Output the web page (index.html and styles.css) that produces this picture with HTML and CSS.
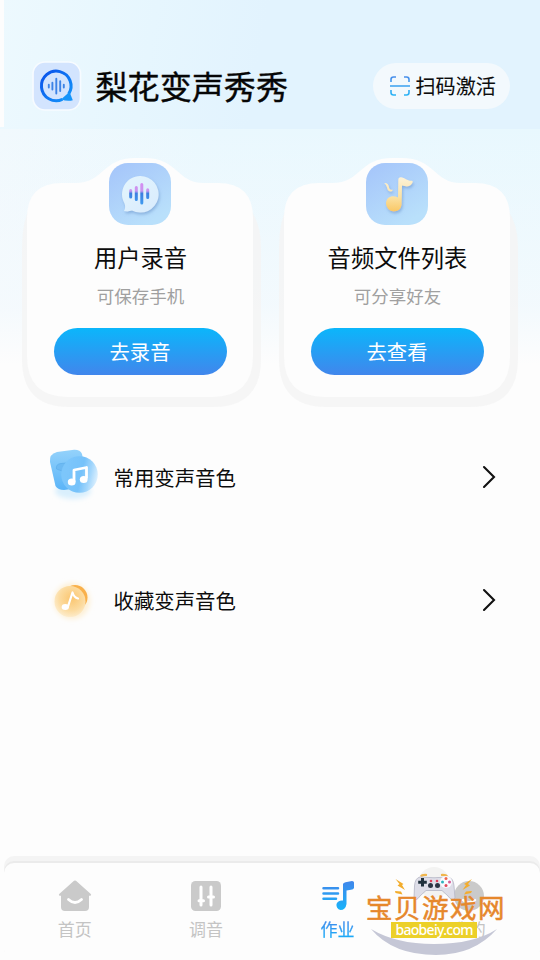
FILE: index.html
```html
<!DOCTYPE html>
<html lang="zh-CN">
<head>
<meta charset="utf-8">
<title>梨花变声秀秀</title>
<link rel="stylesheet" href="styles.css">
</head>
<body>
<svg class="defs" width="0" height="0" aria-hidden="true">
  <defs>
    <linearGradient id="logoStroke" x1="0" y1="0" x2="1" y2="1"><stop offset="0" stop-color="#0a50ea"/><stop offset="1" stop-color="#1497fb"/></linearGradient>
    <linearGradient id="scanStroke" gradientUnits="userSpaceOnUse" x1="0" y1="0" x2="0" y2="20"><stop offset="0" stop-color="#4a8dea"/><stop offset="1" stop-color="#2ab5f5"/></linearGradient>
    <linearGradient id="tile" x1="0" y1="0" x2=".6" y2="1"><stop offset="0" stop-color="#a4c4fa"/><stop offset="1" stop-color="#b9e0fb"/></linearGradient>
    <linearGradient id="bar" gradientUnits="userSpaceOnUse" x1="0" y1="20" x2="0" y2="41"><stop offset="0" stop-color="#d58cf2"/><stop offset=".38" stop-color="#c995ee"/><stop offset=".5" stop-color="#3c7fe0"/><stop offset="1" stop-color="#3f9af0"/></linearGradient>
    <linearGradient id="bubble" x1="0" y1="0" x2="1" y2="1"><stop offset="0" stop-color="#e4f5fd"/><stop offset="1" stop-color="#d8ebfd"/></linearGradient>
    <linearGradient id="gold" gradientUnits="userSpaceOnUse" x1="30" y1="14" x2="30" y2="50"><stop offset="0" stop-color="#fdf3da"/><stop offset=".55" stop-color="#fbe2a4"/><stop offset="1" stop-color="#f9c55f"/></linearGradient>
    <linearGradient id="blueTile" x1="0" y1="0" x2="0" y2="1"><stop offset="0" stop-color="#94d2fb"/><stop offset="1" stop-color="#5ab4f8"/></linearGradient>
    <linearGradient id="blueDisc" x1=".1" y1=".4" x2="1" y2=".6"><stop offset="0" stop-color="#7cc6fb"/><stop offset=".5" stop-color="#76c2fa"/><stop offset=".75" stop-color="#a2d6fc"/><stop offset="1" stop-color="#dff1fe"/></linearGradient>
    <radialGradient id="orangeDisc" cx=".55" cy=".4" r=".65"><stop offset="0" stop-color="#fbc670"/><stop offset=".6" stop-color="#fcdb9f"/><stop offset="1" stop-color="#fdefd4"/></radialGradient>
    <linearGradient id="navBlue" gradientUnits="userSpaceOnUse" x1="0" y1="0" x2="0" y2="30"><stop offset="0" stop-color="#4285ea"/><stop offset="1" stop-color="#18b3fa"/></linearGradient>
    <filter id="soft" x="-40%" y="-40%" width="180%" height="180%"><feGaussianBlur stdDeviation="2.6"/></filter>
    <filter id="edge" x="-10%" y="-10%" width="120%" height="120%"><feGaussianBlur stdDeviation=".7"/></filter>
    <filter id="drop" x="-30%" y="-30%" width="160%" height="160%"><feDropShadow dx="1" dy="2" stdDeviation="1.8" flood-color="#6791c8" flood-opacity=".55"/></filter>
    <symbol id="panel" viewBox="0 0 240 251">
      <path d="M40 26H180Q240 36 240 90V202Q240 250 192 250H48Q1 250 1 202V90Q1 36 40 26Z" fill="#f4f4f4" class="panel-shade"/>
      <path d="M6 61Q6 26 41 26H54C84 26 80 1 115 1H123C158 1 155 26 183 26H197Q232 26 232 61V199Q232 240 191 240H47Q6 240 6 199Z" fill="#fdfdfd"/>
    </symbol>
    <symbol id="chevron" viewBox="0 0 14 24"><path d="M2 2L12 12L2 22" fill="none" stroke="#111" stroke-width="2.1" stroke-linecap="round"/></symbol>
  </defs>
</svg>

<div class="screen">
  <header class="header">
    <svg class="logo" viewBox="0 0 50 50">
      <rect x="1" y="1" width="47.500" height="48" rx="12" fill="#d3e4fe" stroke="#f7fbff" stroke-width="1.700"/>
      <path d="M37.200 32.500A14.800 14.800 0 1 0 31 37.800" transform="translate(-.6 .6)" fill="none" stroke="url(#logoStroke)" stroke-width="3"/>
      <path d="M29 38.500L34 34L37.500 31L40.800 39.200Q35.500 40.500 29 38.500Z" fill="#1594fa"/>
      <path d="M16.800 23.700V26.500M20.400 21.700V28.500M24.300 17.700V32.500M28.200 20.200V30M31.800 23.700V26.500" stroke="#3d83e6" stroke-width="1.900" stroke-linecap="round"/>
    </svg>
    <h1 class="app-name">梨花变声秀秀</h1>
    <div class="scan">
      <svg class="scan-icon" viewBox="0 0 20 20"><path d="M1 6V3.500Q1 1 3.500 1H6M14 1H16.500Q19 1 19 3.500V6M1 14V16.500Q1 19 3.500 19H6M14 19H16.500Q19 19 19 16.500V14M0 10H20" fill="none" stroke="url(#scanStroke)" stroke-width="1.600"/></svg>
      <span>扫码激活</span>
    </div>
  </header>

  <section class="cards">
    <article class="card">
      <svg class="card-bg"><use href="#panel"/></svg>
      <svg class="card-icon" viewBox="0 0 62 62">
        <rect width="62" height="62" rx="19" fill="url(#tile)"/>
        <path d="M31 13A18.300 18.300 0 1 1 23 47.600Q19 49 15 48Q17 45 15.500 40.500A18.300 18.300 0 0 1 31 13Z" fill="url(#bubble)" filter="url(#drop)"/>
        <path d="M21.700 27.500V34M27.300 24.500V36.500M32.800 21.500V40M38.700 26.800V34.500" stroke="url(#bar)" stroke-width="3" stroke-linecap="round"/>
      </svg>
      <h2 class="card-title">用户录音</h2>
      <p class="card-sub">可保存手机</p>
      <div class="card-btn">去录音</div>
    </article>
    <article class="card">
      <svg class="card-bg"><use href="#panel"/></svg>
      <svg class="card-icon" viewBox="0 0 62 62">
        <rect width="62" height="62" rx="19" fill="url(#tile)"/>
        <g fill="url(#gold)" filter="url(#drop)">
          <path d="M32.300 17Q32.300 14 35 14.200C39 14.500 42 18.500 46 17.700Q47.500 18.300 46 20.500C43.500 24.500 39.500 23.500 36 22.500L35.600 42Q34.500 48.500 27.500 48.500A8 8 0 0 1 20 40.500C20 33.500 27 31.500 32 34.500Z"/>
          <path d="M18.200 20Q22.500 19.500 23.200 25Q24 27.500 26.500 26.500Q27 28.500 24 28.500Q21.500 28 21 24.500Q20.500 22 18.200 20Z"/>
        </g>
      </svg>
      <h2 class="card-title">音频文件列表</h2>
      <p class="card-sub">可分享好友</p>
      <div class="card-btn">去查看</div>
    </article>
  </section>

  <section class="rows">
    <div class="row">
      <svg class="row-icon" viewBox="0 0 56 56">
        <ellipse cx="27" cy="42" rx="18" ry="8" fill="#d9effd" filter="url(#soft)"/>
        <path d="M11 3L28 .8Q34 .5 36 5L41 28Q42 37 36 38.500L18 41Q12 41 9.500 37L4 13Q3 5 11 3Z" fill="url(#blueTile)"/>
        <path d="M10.500 20Q9.500 15 15 14.500L20 14L16 22Z" fill="#6dbaf3" stroke="#59abea" stroke-width=".6"/>
        <circle cx="33.500" cy="25.500" r="18.300" fill="url(#blueDisc)" filter="url(#edge)"/>
        <path d="M28 33V21L40.500 18.500V29.500" fill="none" stroke="#fff" stroke-width="2.800" stroke-linejoin="round"/>
        <ellipse cx="25.700" cy="33" rx="3.900" ry="3.500" fill="#fff"/><ellipse cx="37.700" cy="30.500" rx="3.900" ry="3.500" fill="#fff"/>
      </svg>
      <span class="row-label">常用变声音色</span>
      <svg class="chevron"><use href="#chevron"/></svg>
    </div>
    <div class="row">
      <svg class="row-icon" viewBox="0 0 56 56">
        <circle cx="26" cy="29" r="18" fill="#fdf0d6" filter="url(#soft)"/>
        <circle cx="29" cy="25.500" r="12.500" fill="#f9b04a"/>
        <circle cx="24" cy="29.500" r="15.500" fill="url(#orangeDisc)" filter="url(#edge)"/>
        <path d="M22 34.500L26.500 20.500Q28 25.500 32 26.500" fill="none" stroke="#fff" stroke-width="2.200" stroke-linecap="round" stroke-linejoin="round"/>
        <ellipse cx="19.300" cy="35" rx="3.700" ry="3" fill="#fff"/>
      </svg>
      <span class="row-label">收藏变声音色</span>
      <svg class="chevron"><use href="#chevron"/></svg>
    </div>
  </section>

  <nav class="nav">
    <div class="tab">
      <svg class="tab-icon" viewBox="0 0 34 32"><path d="M16 .8Q17 0 18 .8L32.500 13.800Q34 15.500 32 15.700H31V27Q31 31 27 31H7Q3 31 3 27V15.700H2Q0 15.500 1.500 13.800Z" fill="#cacaca"/><path d="M10.500 19.500Q17 25.500 23.500 19.500" fill="none" stroke="#fff" stroke-width="2.800" stroke-linecap="round"/></svg>
      <span>首页</span>
    </div>
    <div class="tab">
      <svg class="tab-icon" viewBox="0 0 34 32"><rect x="2" y="1" width="30" height="30" rx="4.500" fill="#cacaca"/><path d="M12 7V25M22 7V25" stroke="#fff" stroke-width="3" stroke-linecap="round"/><path d="M10 20.700H14.500M19.500 17H24.500" stroke="#fff" stroke-width="3" stroke-linecap="round"/></svg>
      <span>调音</span>
    </div>
    <div class="tab tab-active">
      <svg class="tab-icon" viewBox="0 0 34 32"><path d="M3.500 8.200H18M3.500 13.500H18M3.500 18.800H16" stroke="url(#navBlue)" stroke-width="2.500" stroke-linecap="round"/><path d="M23 4Q23.500 2.700 25.500 2.300L32 1Q34 1 34 2.500V8Q33.500 9.800 31 9.800L26.500 10.500V24Q25.500 30 20.500 30A5.500 5.500 0 0 1 16.500 24Q18 20 23 20.500Z" fill="url(#navBlue)"/></svg>
      <span>作业</span>
    </div>
    <div class="tab">
      <svg class="tab-icon" viewBox="0 0 34 32"><circle cx="17" cy="16" r="15" fill="#cacaca"/><path d="M11 20Q17 25 23 20" fill="none" stroke="#fff" stroke-width="2.500" stroke-linecap="round"/></svg>
      <span>我的</span>
    </div>
  </nav>

  <svg class="brand" viewBox="0 0 150 100" width="150" height="100">
    <circle cx="74" cy="22.500" r="15.500" fill="#f3f3f2"/>
    <path d="M61 16.500Q62 14.500 67 15M81 15Q86 14.500 87 16.500" fill="none" stroke="#f0b64d" stroke-width="2.200"/>
    <path d="M60 17Q74 18.500 88 17Q93.500 18 94 26L95 38Q92 42 88 36L82 30.500H66L60 36Q56 42 54 38L54.500 26Q55 18 60 17Z" fill="#dedee8" stroke="#b4b5c4" stroke-width=".8"/>
    <path d="M62.500 18V26.500M58.200 22.200H66.800" stroke="#20313c" stroke-width="3"/>
    <circle cx="70.500" cy="25.500" r="2.500" fill="#2c3543"/><circle cx="77.500" cy="25.500" r="2.500" fill="#2c3543"/>
    <circle cx="71" cy="21" r="1.300" fill="#de4058"/><circle cx="77" cy="21" r="1.300" fill="#de4058"/>
    <circle cx="86" cy="22" r="6" fill="#fafaff"/>
    <circle cx="86" cy="18.500" r="1.500" fill="#ef6650"/><circle cx="86" cy="25.500" r="1.500" fill="#e14a5b"/><circle cx="82.500" cy="22" r="1.500" fill="#2eb3bd"/><circle cx="89.500" cy="22" r="1.500" fill="#d55e96"/>
    <path d="M35.500 19L43.500 24L42 25L45 30L37.500 25.500L39.500 24ZM35 31L41 31.500L42.500 34.500L35.500 33ZM112 19L104 24L106 25L102.500 30L110 25.500L108 24ZM112 31L106 31.500L104 34.500L111 33Z" fill="#f3ad2d"/>
    <path d="M11 69Q36 84 74 84Q114 84 137 69Q114 95 76 95Q33 95 11 69Z" fill="#c5c7d6"/>
    <rect x="31" y="62" width="86" height="16" fill="#ecd028"/>
    <text class="brand-name brand-halo" x="6" y="58">宝贝游戏网</text>
    <text class="brand-url" x="35.500" y="74.500" textLength="78">baobeiy.com</text>
  </svg>
</div>
</body>
</html>
```
FILE: styles.css
```css
* { box-sizing: border-box; }

body {
  margin: 0;
  background: #fdfdfd;
  font-family: "Noto Sans CJK SC", sans-serif;
  color: #0c0c0c;
}

.defs { position: absolute; }

.screen {
  position: relative;
  display: flex;
  flex-direction: column;
  height: 960px;
  overflow: hidden;
  background:
    linear-gradient(#fdfdfd, #fdfdfd) 0 0 / 4px 127px no-repeat,
    linear-gradient(100deg, #edf9fe 0, #e6f6fe 28%, #e2f3fe 48%, #e2f3fe) 0 0 / 100% 129px no-repeat,
    linear-gradient(to bottom, rgba(253, 253, 253, 0) 0, rgba(246, 250, 253, .75) 75%, #fdfdfd 100%) 0 129px / 100% 236px no-repeat,
    linear-gradient(100deg, #f1f9fd 0, #eaf8fe 35%, #e8f8fe) 0 129px / 100% 236px no-repeat,
    #fdfdfd;
}

.header {
  display: flex;
  align-items: center;
  height: 50px;
  margin: 61px 30px 0 32px;
}

.logo { width: 50px; height: 50px; flex: none; }

.app-name {
  margin: -2px auto 0 13.5px;
  font-size: 32.1px;
  line-height: 46px;
  font-weight: 400;
  color: #060606;
  -webkit-text-stroke: .4px;
}

.scan {
  display: flex;
  align-items: center;
  gap: 5.5px;
  width: 137px;
  height: 46px;
  padding-left: 17px;
  border-radius: 23px;
  background: #f3f9fd;
  font-size: 20.1px;
  line-height: 30px;
  font-weight: 400;
  white-space: nowrap;
  -webkit-text-stroke: .1px;
}

.scan-icon { width: 20px; height: 20px; flex: none; }

.cards {
  display: grid;
  grid-template-columns: 226px 226px;
  column-gap: 31px;
  margin: 47px 0 0 27px;
}

.card {
  position: relative;
  display: flex;
  flex-direction: column;
  align-items: center;
  height: 240px;
  padding-top: 5px;
}

.card > * { position: relative; }

.card > .card-bg {
  position: absolute;
  left: -6px;
  top: -1px;
  width: 240px;
  height: 251px;
}

.panel-shade { opacity: .85; }

.card-icon { width: 62px; height: 62px; }

.card-title {
  margin: 16px 0 0 1px;
  font-size: 23.3px;
  line-height: 33px;
  font-weight: 400;
}

.card-sub {
  margin: 9px 0 0 1px;
  font-size: 17.5px;
  line-height: 25px;
  color: #a0a0a0;
}

.card-btn {
  width: 173px;
  height: 47px;
  margin-top: 20px;
  border-radius: 24px;
  background: linear-gradient(#0bb6fb, #4186ec);
  color: #fff;
  font-size: 20.3px;
  line-height: 47px;
  text-align: center;
}

.rows {
  display: flex;
  flex-direction: column;
  margin: 18px 44px 0 46px;
}

.row {
  display: flex;
  align-items: center;
  height: 122.5px;
}

.row-icon { width: 56px; height: 56px; flex: none; }

.row-label {
  margin-left: 11.5px;
  font-size: 20.4px;
  line-height: 30px;
}

.chevron { width: 14px; height: 24px; margin-left: auto; }

.nav {
  display: grid;
  grid-template-columns: repeat(4, 131.4px);
  height: 97px;
  margin: auto 0 0 4px;
  padding: 17px 0 0 5px;
  border-radius: 10px;
  background: #fdfdfd;
  box-shadow: 0 -2px 0 #ebebeb, 0 -7px 0 #f4f4f4;
}

.tab {
  display: flex;
  flex-direction: column;
  align-items: center;
  gap: 4px;
  color: #c4c4c4;
  font-size: 17px;
  line-height: 25px;
}

.tab-icon { width: 34px; height: 32px; }

.tab-active span {
  background: linear-gradient(#4388eb 15%, #18adf8 90%);
  background-clip: text;
  -webkit-background-clip: text;
  color: transparent;
  -webkit-text-stroke: .25px transparent;
}

.brand { position: absolute; left: 360px; top: 860px; }

.brand-name {
  fill: #e6872b;
  font-size: 26.5px;
  letter-spacing: 1.5px;
  font-weight: 400;
}

.brand-halo {
  stroke: #e6872b;
  stroke-width: .5px;
}

.brand-url {
  fill: #fff;
  font-family: "Noto Sans", "Open Sans", sans-serif;
  font-size: 14px;
  font-weight: 500;
}
```
